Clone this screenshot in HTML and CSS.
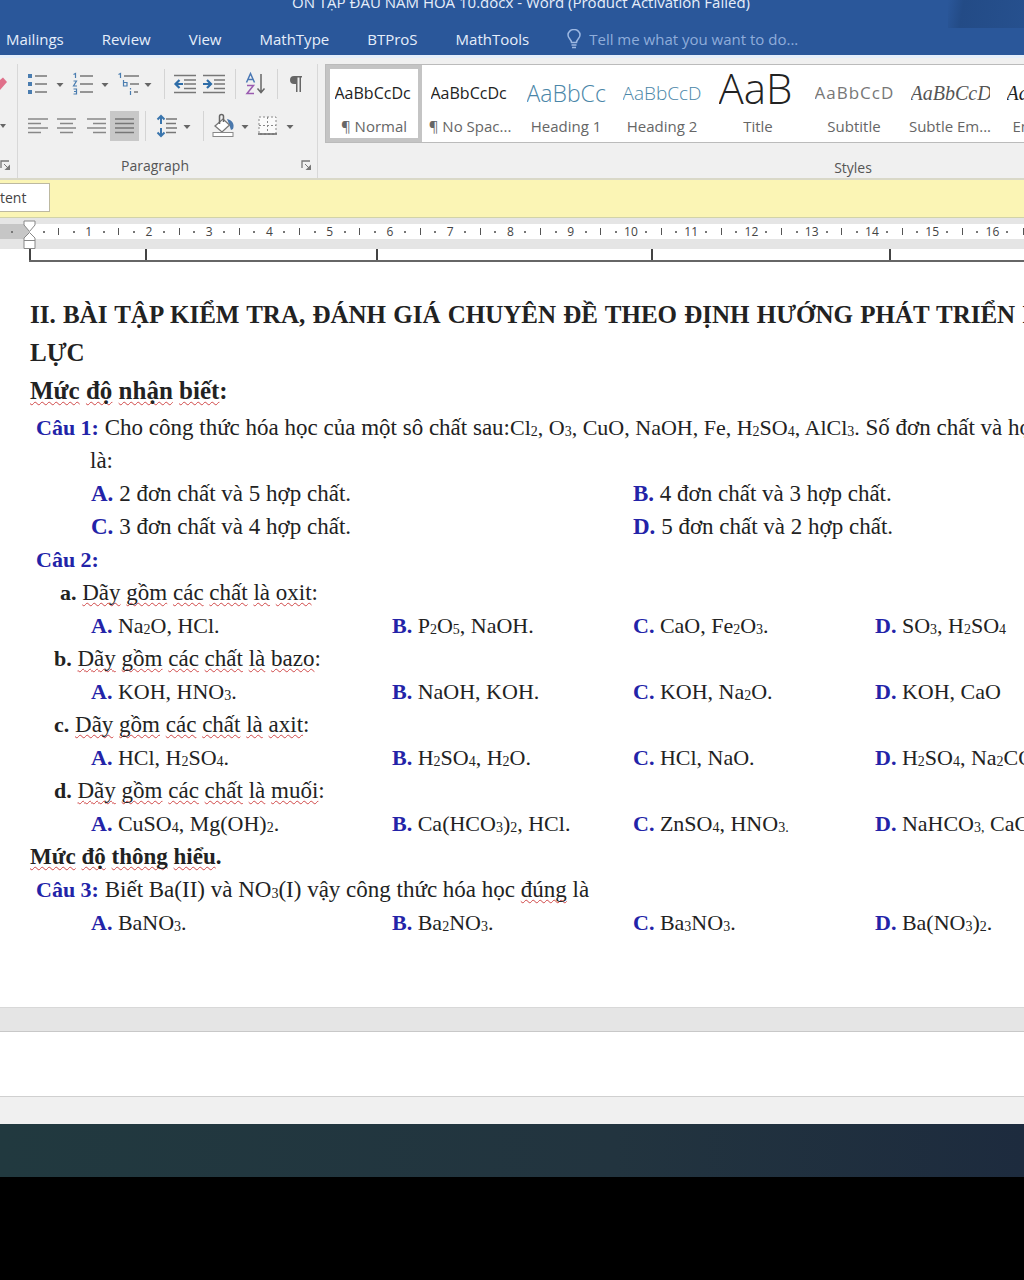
FILE: index.html
```html
<!DOCTYPE html>
<html lang="vi">
<head>
    <meta charset="UTF-8">
    <meta name="viewport" content="width=device-width, initial-scale=1.0">
    <title>ÔN TẬP ĐẦU NĂM HÓA 10.docx - Word</title>
    <link rel="stylesheet" href="styles.css">
</head>
<body>
    <header class="titlebar">
        <div class="doc-title">ÔN TẬP ĐẦU NĂM HÓA 10.docx - Word (Product Activation Failed)</div>
        <nav class="tabs">
            <a href="#">Mailings</a>
            <a href="#">Review</a>
            <a href="#">View</a>
            <a href="#">MathType</a>
            <a href="#">BTProS</a>
            <a href="#">MathTools</a>
            <label class="tell-me">
                <svg width="14" height="20" viewBox="0 0 14 20" fill="none" stroke="#9db8e2" stroke-width="1.5">
                    <path d="M4.5 13.5 C4.500 10.500 1 9.500 1 6 A6 5.500 0 0 1 13 6 C13 9.500 9.500 10.500 9.500 13.500 Z"/>
                    <path d="M4.500 16 H9.500 M5 18.500 H9"/>
                </svg>
                <input type="text" placeholder="Tell me what you want to do..." aria-label="Tell me what you want to do">
            </label>
        </nav>
    </header>

    <div class="ribbon">
        <section class="group group-cut">
            <div class="tool-row">
                <button class="tool cut" aria-label="Clear formatting">
                    <svg width="17" height="30" viewBox="0 0 17 30"><path d="M0 11 L3 8.500 L7 13 L0 21 Z" fill="#e0708a"/></svg>
                </button>
            </div>
            <div class="tool-row">
                <button class="tool cut" aria-label="Font color">
                    <svg width="17" height="30" viewBox="0 0 17 30"><path d="M0 13 H6 L3 17 Z" fill="#666"/></svg>
                </button>
            </div>
            <div class="group-foot">
                <button class="launcher" aria-label="Font settings">
                    <svg width="11" height="11" viewBox="0 0 11 11"><path d="M1 8 V1 H9" fill="none" stroke="#777" stroke-width="1.300"/><path d="M4 4 L9 9" stroke="#777"/><path d="M10 4.500 V10 H4.500 Z" fill="#777"/></svg>
                </button>
            </div>
        </section>

        <section class="group paragraph">
            <div class="tool-row">
                <button class="tool split" aria-label="Bullets">
                    <svg width="45" height="30" viewBox="0 0 45 30">
                        <g fill="#4a7db0"><rect x="5" y="5" width="4" height="4"/><rect x="5" y="13" width="4" height="4"/><rect x="5" y="21" width="4" height="4"/></g>
                        <path d="M12 7 H24 M12 15 H24 M12 23 H24" stroke="#777" stroke-width="1.600"/>
                        <path d="M33.500 14 H40.500 L37 18 Z" fill="#666"/>
                    </svg>
                </button>
                <button class="tool split" aria-label="Numbering">
                    <svg width="45" height="30" viewBox="0 0 45 30">
                        <g fill="none" stroke="#4a7db0" stroke-width="1.200"><path d="M5.500 5.500 L7.500 4.500 V9"/><path d="M5.500 12 H8.500 L5.500 17 H9"/><path d="M5.500 20 H8.500 V25 H5.500 M6 22.500 H8.500"/></g>
                        <path d="M12 7 H25 M12 15 H25 M12 23 H25" stroke="#777" stroke-width="1.600"/>
                        <path d="M33.500 14 H40.500 L37 18 Z" fill="#666"/>
                    </svg>
                </button>
                <button class="tool split" aria-label="Multilevel list">
                    <svg width="45" height="30" viewBox="0 0 45 30">
                        <g fill="none" stroke="#4a7db0" stroke-width="1.200"><path d="M5.500 5.500 L7.500 4.500 V9"/><path d="M10.500 11 V17 H14 V13.500 H10.500"/><path d="M17.500 19 V20.500 M17.500 22 V26"/></g>
                        <path d="M11 7 H26 M17 15 H26 M21 23 H25" stroke="#777" stroke-width="1.600"/>
                        <path d="M31.500 14 H38.500 L35 18 Z" fill="#666"/>
                    </svg>
                </button>
                <span class="divider"></span>
                <button class="tool" aria-label="Decrease indent">
                    <svg width="29" height="30" viewBox="0 0 29 30">
                        <path d="M3 6.500 H25 M13 11 H25 M13 15 H25 M13 19.500 H25 M3 23.500 H25" stroke="#777" stroke-width="1.500"/>
                        <path d="M12 15 H5 M8.500 11 L4.500 15 L8.500 19" fill="none" stroke="#2e6da8" stroke-width="2.200"/>
                    </svg>
                </button>
                <button class="tool" aria-label="Increase indent">
                    <svg width="29" height="30" viewBox="0 0 29 30">
                        <path d="M3 6.500 H25 M14 11 H25 M14 15 H25 M14 19.500 H25 M3 23.500 H25" stroke="#777" stroke-width="1.500"/>
                        <path d="M3 15 H10 M7 11 L11 15 L7 19" fill="none" stroke="#2e6da8" stroke-width="2.200"/>
                    </svg>
                </button>
                <span class="divider"></span>
                <button class="tool" aria-label="Sort">
                    <svg width="29" height="30" viewBox="0 0 29 30" fill="none">
                        <path d="M4.500 13.500 L8.500 4.500 L12.500 13.500 M6 10.500 H11" stroke="#4a78b5" stroke-width="1.500"/>
                        <path d="M5 16.500 H11.500 L5 24.500 H12" stroke="#9a5bb0" stroke-width="1.500"/>
                        <path d="M19 5 V23 M15.500 19.500 L19 23.500 L22.500 19.500" stroke="#666" stroke-width="1.500"/>
                    </svg>
                </button>
                <span class="divider"></span>
                <button class="tool" aria-label="Show paragraph marks">
                    <svg width="29" height="30" viewBox="0 0 29 30">
                        <path d="M10 7 H18 V8.500 H17 V23 H15.500 V8.500 H13.500 V23 H12 V15 H10 A4 4 0 0 1 10 7 Z" fill="#666"/>
                    </svg>
                </button>
            </div>
            <div class="tool-row">
                <button class="tool" aria-label="Align left">
                    <svg width="29" height="30" viewBox="0 0 29 30"><path d="M5 8 H25 M5 12.500 H18 M5 17 H25 M5 21.500 H18" stroke="#888" stroke-width="1.600"/></svg>
                </button>
                <button class="tool" aria-label="Center">
                    <svg width="29" height="30" viewBox="0 0 29 30"><path d="M5 8 H24 M8 12.500 H21 M5 17 H24 M8 21.500 H21" stroke="#888" stroke-width="1.600"/></svg>
                </button>
                <button class="tool" aria-label="Align right">
                    <svg width="29" height="30" viewBox="0 0 29 30"><path d="M6 8 H25 M12 12.500 H25 M6 17 H25 M12 21.500 H25" stroke="#888" stroke-width="1.600"/></svg>
                </button>
                <button class="tool pressed" aria-label="Justify">
                    <svg width="29" height="30" viewBox="0 0 29 30"><path d="M5 8 H24 M5 12.500 H24 M5 17 H24 M5 21.500 H24" stroke="#777" stroke-width="1.600"/></svg>
                </button>
                <span class="divider"></span>
                <button class="tool split" aria-label="Line spacing">
                    <svg width="45" height="30" viewBox="0 0 45 30" fill="none">
                        <path d="M9 5 V13 M5.500 8.500 L9 5 L12.500 8.500 M9 17 V25 M5.500 21.500 L9 25 L12.500 21.500" stroke="#3a75ad" stroke-width="2"/>
                        <path d="M14 8 H25 M14 12.500 H24 M14 17 H25 M14 21.500 H24" stroke="#777" stroke-width="1.500"/>
                        <path d="M31.500 14 H38.500 L35 18 Z" fill="#666"/>
                    </svg>
                </button>
                <span class="divider"></span>
                <button class="tool split" aria-label="Shading">
                    <svg width="45" height="30" viewBox="0 0 45 30">
                        <path d="M17 8 C22 9 25 13 23 18 L21 19 L19 13 Z" fill="#4a78ad"/>
                        <path d="M5 15 L13 8 L19.500 14 L12 21 Z" fill="#fff" stroke="#777" stroke-width="1.300"/>
                        <path d="M9.500 13 V5.500 A2 2 0 0 1 13.500 5.500 V11" fill="none" stroke="#666" stroke-width="1.500"/>
                        <rect x="3" y="21.500" width="20" height="4" fill="#fff" stroke="#888"/>
                        <path d="M31.500 14 H38.500 L35 18 Z" fill="#666"/>
                    </svg>
                </button>
                <button class="tool split" aria-label="Borders">
                    <svg width="45" height="30" viewBox="0 0 45 30">
                        <rect x="4" y="6" width="17" height="17" fill="#fafafa" stroke="#888" stroke-dasharray="2 2"/>
                        <path d="M12.500 6 V22 M4 14.500 H21" stroke="#888" stroke-dasharray="2 2"/>
                        <path d="M3 23 H22" stroke="#666" stroke-width="1.500"/>
                        <path d="M31.500 14 H38.500 L35 18 Z" fill="#666"/>
                    </svg>
                </button>
            </div>
            <div class="group-foot">
                <span class="group-name">Paragraph</span>
                <button class="launcher" aria-label="Paragraph settings">
                    <svg width="11" height="11" viewBox="0 0 11 11"><path d="M1 8 V1 H9" fill="none" stroke="#777" stroke-width="1.300"/><path d="M4 4 L9 9" stroke="#777"/><path d="M10 4.500 V10 H4.500 Z" fill="#777"/></svg>
                </button>
            </div>
        </section>

        <section class="styles">
            <div class="gallery">
                <button class="style selected"><span class="preview">AaBbCcDc</span><span class="style-name">¶ Normal</span></button>
                <button class="style"><span class="preview">AaBbCcDc</span><span class="style-name">¶ No Spac...</span></button>
                <button class="style"><span class="preview heading1">AaBbCc</span><span class="style-name">Heading 1</span></button>
                <button class="style"><span class="preview heading2">AaBbCcD</span><span class="style-name">Heading 2</span></button>
                <button class="style"><span class="preview title">AaB</span><span class="style-name">Title</span></button>
                <button class="style"><span class="preview subtitle">AaBbCcD</span><span class="style-name">Subtitle</span></button>
                <button class="style"><span class="preview emphasis">AaBbCcD</span><span class="style-name">Subtle Em...</span></button>
                <button class="style"><span class="preview emphasis dark">AaBbCcD</span><span class="style-name">Emphasis</span></button>
            </div>
            <div class="styles-foot">Styles</div>
        </section>
    </div>

    <div class="message-bar">
        <button class="enable">tent</button>
    </div>

    <div class="ruler">
        <div class="ruler-margin"><i class="dot"></i></div>
        <div class="ruler-start"><i class="dot"></i></div>
        <ol class="ruler-units">
            <li><i class="tick"></i><i class="dot"></i><b>1</b><i class="dot"></i></li>
            <li><i class="tick"></i><i class="dot"></i><b>2</b><i class="dot"></i></li>
            <li><i class="tick"></i><i class="dot"></i><b>3</b><i class="dot"></i></li>
            <li><i class="tick"></i><i class="dot"></i><b>4</b><i class="dot"></i></li>
            <li><i class="tick"></i><i class="dot"></i><b>5</b><i class="dot"></i></li>
            <li><i class="tick"></i><i class="dot"></i><b>6</b><i class="dot"></i></li>
            <li><i class="tick"></i><i class="dot"></i><b>7</b><i class="dot"></i></li>
            <li><i class="tick"></i><i class="dot"></i><b>8</b><i class="dot"></i></li>
            <li><i class="tick"></i><i class="dot"></i><b>9</b><i class="dot"></i></li>
            <li><i class="tick"></i><i class="dot"></i><b>10</b><i class="dot"></i></li>
            <li><i class="tick"></i><i class="dot"></i><b>11</b><i class="dot"></i></li>
            <li><i class="tick"></i><i class="dot"></i><b>12</b><i class="dot"></i></li>
            <li><i class="tick"></i><i class="dot"></i><b>13</b><i class="dot"></i></li>
            <li><i class="tick"></i><i class="dot"></i><b>14</b><i class="dot"></i></li>
            <li><i class="tick"></i><i class="dot"></i><b>15</b><i class="dot"></i></li>
            <li><i class="tick"></i><i class="dot"></i><b>16</b><i class="dot"></i></li>
        </ol>
        <div class="ruler-end"><i class="tick"></i></div>
        <svg class="indent-marker" width="13" height="30" viewBox="0 0 13 30" fill="#fff" stroke="#888">
            <path d="M1 1 H12 V5 L6.500 11.500 L1 5 Z"/>
            <path d="M6.500 12.500 L12 18 V28.500 H1 V18 Z"/>
            <path d="M1 20.500 H12"/>
        </svg>
    </div>

    <main class="page">
        <div class="table-end"><i></i><i></i><i></i><i></i><i></i></div>

        <h1>II. BÀI TẬP KIỂM TRA, ĐÁNH GIÁ CHUYÊN ĐỀ THEO ĐỊNH HƯỚNG PHÁT TRIỂN NĂNG LỰC</h1>
        <h2><u>Mức</u> <u>độ</u> <u>nhận</u> <u>biết</u>:</h2>

        <p class="question"><b>Câu 1:</b> Cho công thức hóa học của một sô chất sau:<span class="formulas">Cl<sub>2</sub>, O<sub>3</sub>, CuO, NaOH, Fe, H<sub>2</sub>SO<sub>4</sub>, AlCl<sub>3</sub>.</span> Số đơn chất và hợp chất<br>là:</p>
        <div class="options two">
            <span><b>A.</b> 2 đơn chất và 5 hợp chất.</span>
            <span><b>B.</b> 4 đơn chất và 3 hợp chất.</span>
            <span><b>C.</b> 3 đơn chất và 4 hợp chất.</span>
            <span><b>D.</b> 5 đơn chất và 2 hợp chất.</span>
        </div>

        <p class="question"><b>Câu 2:</b></p>
        <p class="part first"><b>a.</b> <u>Dãy</u> <u>gồm</u> <u>các</u> <u>chất</u> <u>là</u> <u>oxit</u>:</p>
        <div class="options">
            <span><b>A.</b> Na<sub>2</sub>O, HCl.</span>
            <span><b>B.</b> P<sub>2</sub>O<sub>5</sub>, NaOH.</span>
            <span><b>C.</b> CaO, Fe<sub>2</sub>O<sub>3</sub>.</span>
            <span><b>D.</b> SO<sub>3</sub>, H<sub>2</sub>SO<sub>4</sub></span>
        </div>
        <p class="part"><b>b.</b> <u>Dãy</u> <u>gồm</u> <u>các</u> <u>chất</u> <u>là</u> <u>bazo</u>:</p>
        <div class="options">
            <span><b>A.</b> KOH, HNO<sub>3</sub>.</span>
            <span><b>B.</b> NaOH, KOH.</span>
            <span><b>C.</b> KOH, Na<sub>2</sub>O.</span>
            <span><b>D.</b> KOH, CaO</span>
        </div>
        <p class="part"><b>c.</b> <u>Dãy</u> <u>gồm</u> <u>các</u> <u>chất</u> <u>là</u> <u>axit</u>:</p>
        <div class="options">
            <span><b>A.</b> HCl, H<sub>2</sub>SO<sub>4</sub>.</span>
            <span><b>B.</b> H<sub>2</sub>SO<sub>4</sub>, H<sub>2</sub>O.</span>
            <span><b>C.</b> HCl, NaO.</span>
            <span><b>D.</b> H<sub>2</sub>SO<sub>4</sub>, Na<sub>2</sub>CO<sub>3</sub></span>
        </div>
        <p class="part"><b>d.</b> <u>Dãy</u> <u>gồm</u> <u>các</u> <u>chất</u> <u>là</u> <u>muối</u>:</p>
        <div class="options">
            <span><b>A.</b> CuSO<sub>4</sub>, Mg(OH)<sub>2</sub>.</span>
            <span><b>B.</b> Ca(HCO<sub>3</sub>)<sub>2</sub>, HCl.</span>
            <span><b>C.</b> ZnSO<sub>4</sub>, HNO<sub>3.</sub></span>
            <span><b>D.</b> NaHCO<sub>3,</sub> CaCO<sub>3</sub></span>
        </div>

        <h3><u>Mức</u> <u>độ</u> <u>thông</u> <u>hiểu</u>.</h3>
        <p class="question"><b>Câu 3:</b> Biết Ba(II) và NO<sub>3</sub>(I) vậy công thức hóa học <u>đúng</u> là</p>
        <div class="options">
            <span><b>A.</b> BaNO<sub>3</sub>.</span>
            <span><b>B.</b> Ba<sub>2</sub>NO<sub>3</sub>.</span>
            <span><b>C.</b> Ba<sub>3</sub>NO<sub>3</sub>.</span>
            <span><b>D.</b> Ba(NO<sub>3</sub>)<sub>2</sub>.</span>
        </div>
    </main>

    <div class="page-gap"></div>
    <div class="next-page"></div>
    <footer class="status-bar"></footer>
    <div class="taskbar"></div>
</body>
</html>
```
FILE: styles.css
```css
* {
    box-sizing: border-box;
}
body {
    margin: 0;
    background: #000;
    font-family: "Segoe UI", "Open Sans", sans-serif;
    font-size: 14px;
    overflow-x: hidden;
}
button {
    padding: 0;
    border: none;
    background: none;
    font: inherit;
}
svg {
    display: block;
}

/* title bar and tabs */
.titlebar {
    height: 55px;
    overflow: hidden;
    background: linear-gradient(100deg, #2a579a, #234b86 20%, #26508e) top right / 76px 28px no-repeat, #2a579a;
    color: #e6eefa;
    font-size: 15px;
}
.doc-title {
    height: 26px;
    margin-top: -8px;
    padding-left: 18px;
    line-height: 20px;
    text-align: center;
    white-space: nowrap;
}
.tabs {
    display: flex;
    align-items: center;
    gap: 38px;
    height: 42px;
    padding-left: 6px;
    white-space: nowrap;
}
.tabs a {
    color: #e6eefa;
    text-decoration: none;
}
.tell-me {
    display: flex;
    align-items: center;
    flex: 1;
    gap: 8px;
}
.tell-me input {
    flex: 1;
    min-width: 0;
    padding: 0;
    border: none;
    outline: none;
    background: none;
    color: #fff;
    font: inherit;
}
.tell-me input::placeholder {
    color: #8fadda;
    opacity: 1;
}

/* ribbon */
.ribbon {
    display: flex;
    height: 125px;
    padding-top: 6px;
    border-top: 3px solid #e4eefb;
    border-bottom: 2px solid #d9d8c8;
    background: #f0f0f0;
    color: #555;
    overflow: hidden;
}
.group {
    display: flex;
    flex-direction: column;
    gap: 12px;
    padding-top: 5px;
    border-right: 1px solid #d8d8d8;
}
.group-cut {
    width: 18px;
}
.paragraph {
    width: 300px;
    padding-left: 5px;
}
.tool-row {
    display: flex;
    height: 30px;
}
.tool {
    width: 29px;
}
.tool.split {
    width: 45px;
}
.tool.cut {
    width: 17px;
}
.tool.pressed {
    background: #c8c8c8;
}
.divider {
    width: 1px;
    margin: 0 6px;
    background: #d4d4d4;
}
.group-foot {
    display: flex;
    align-items: center;
    height: 30px;
}
.group-name {
    flex: 1;
    padding-right: 14px;
    text-align: center;
}
.paragraph .group-foot {
    padding-right: 5px;
}
.styles {
    flex: 1;
    min-width: 0;
    padding-left: 7px;
}
.gallery {
    display: flex;
    height: 79px;
    border: 1px solid #bbb;
    border-right: none;
    background: #fff;
    overflow: hidden;
}
.style {
    display: flex;
    flex: none;
    flex-direction: column;
    align-items: center;
    width: 96px;
    padding-top: 9px;
    color: #666;
}
.style.selected {
    padding-top: 5px;
    border: 4px solid #c4c4c4;
}
.preview {
    width: 79px;
    height: 40px;
    line-height: 38px;
    overflow: hidden;
    white-space: nowrap;
    text-align: left;
    font-size: 16px;
    color: #222;
}
.preview.heading1 {
    font-size: 23px;
    font-weight: 300;
    color: #4a86a8;
}
.preview.heading2 {
    font-size: 19px;
    font-weight: 300;
    color: #4a86a8;
}
.preview.title {
    font-size: 42px;
    font-weight: 300;
    line-height: 28px;
}
.preview.subtitle {
    font-size: 17px;
    letter-spacing: 1px;
    color: #777;
}
.preview.emphasis {
    font-family: "Liberation Serif", serif;
    font-size: 20px;
    font-style: italic;
    color: #555;
}
.preview.dark {
    color: #222;
}
.style-name {
    height: 24px;
    line-height: 24px;
    font-size: 15px;
    white-space: nowrap;
}
.styles-foot {
    padding: 15px 0 0 357px;
    line-height: 20px;
    text-align: center;
}

/* message bar */
.message-bar {
    height: 38px;
    padding-top: 3px;
    border-bottom: 1px solid #d2d3a8;
    background: #fbf5b5;
}
.enable {
    width: 50px;
    height: 29px;
    padding-right: 23px;
    border: 1px solid #bdb9a0;
    border-left: none;
    background: #fff;
    color: #444;
    text-align: right;
}

/* ruler */
.ruler {
    position: relative;
    display: flex;
    height: 31px;
    padding: 6px 0 10px;
    background: #e5e5e5;
    font-size: 12px;
}
.ruler-margin,
.ruler-start,
.ruler-end,
.ruler-units {
    display: flex;
    align-items: center;
    background: #fff;
}
.ruler-margin {
    width: 29px;
    padding-left: 11px;
    background: #c6c6c6;
}
.ruler-start {
    width: 22px;
    padding-left: 14px;
}
.ruler-end {
    width: 9px;
    justify-content: flex-end;
}
.ruler-units {
    flex: 1;
    margin: 0;
    padding: 0;
    list-style: none;
}
.ruler-units li {
    display: grid;
    flex: 1;
    grid-template-columns: repeat(4, minmax(0, 1fr));
    align-items: center;
    justify-items: center;
}
.ruler-units b {
    font-weight: 400;
    line-height: 15px;
    color: #444;
}
.dot {
    width: 2px;
    height: 2px;
    background: #777;
}
.tick {
    width: 1px;
    height: 7px;
    background: #555;
}
.indent-marker {
    position: absolute;
    left: 23px;
    top: 2px;
}

/* document */
.page {
    padding: 0 0 68px 30px;
    overflow: hidden;
    background: #fff;
    color: #222;
    font-family: "Palatino Linotype", "Liberation Serif", serif;
    font-size: 22px;
    line-height: 33px;
    white-space: nowrap;
}
.table-end {
    display: grid;
    grid-template-columns: 116px 231px 275px 238px 1fr;
    height: 13px;
    margin: 0 0 34px -1px;
    border-bottom: 2px solid #666;
}
.table-end i {
    border-left: 2px solid #444;
}
.page h1,
.page h2,
.page h3,
.page p {
    margin: 0;
    font-size: 23px;
}
.page h1,
.page h2 {
    font-size: 25px;
    line-height: 38px;
}
/* the text column runs on past the window's edge */
.page h1 {
    margin-right: -72px;
    text-align: justify;
    white-space: normal;
}
.page h2 {
    margin-bottom: 1px;
}
.page u {
    text-decoration: underline wavy #d04848 1px;
    text-decoration-skip-ink: none;
    text-underline-offset: 2px;
}
.page sub {
    font-size: 14px;
    line-height: 0;
    vertical-align: -1px;
}
.question {
    padding-left: 60px;
    text-indent: -54px;
}
.question b,
.options b {
    color: #2323a8;
}
.question b,
.part b,
.formulas {
    font-size: 22px;
}
.part {
    padding-left: 24px;
}
.part.first {
    padding-left: 30px;
}
.options {
    display: grid;
    grid-template-columns: 301px 241px 242px 1fr;
    padding-left: 61px;
}
.options.two {
    grid-template-columns: 542px 1fr;
    font-size: 23px;
}

/* bottom of the window */
.page-gap {
    height: 25px;
    border-top: 1px solid #d8d8d8;
    border-bottom: 1px solid #c8c8c8;
    background: #e5e5e5;
}
.next-page {
    height: 64px;
    background: #fff;
}
.status-bar {
    height: 28px;
    border-top: 1px solid #d0d0d0;
    background: #f0f0f0;
}
.taskbar {
    height: 53px;
    background: linear-gradient(90deg, #21393f, #22343f 60%, #1d2b3e);
}
```
